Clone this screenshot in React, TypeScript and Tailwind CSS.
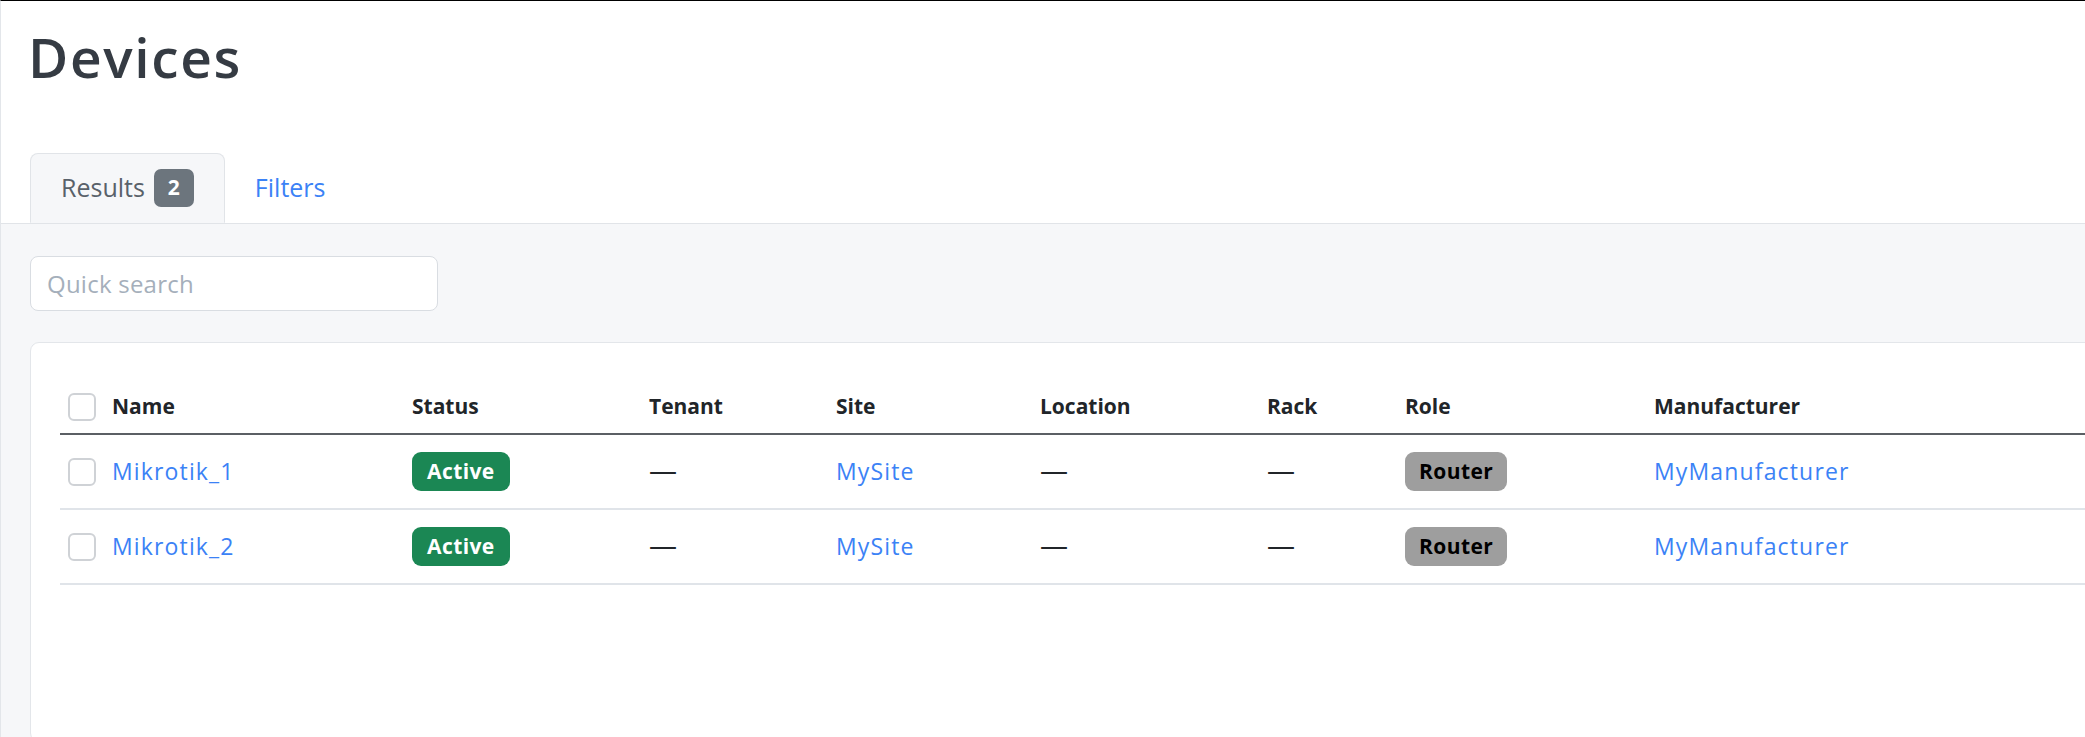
const columns = ["Status", "Tenant", "Site", "Location", "Rack", "Role", "Manufacturer"];

const devices = [
    { id: 1, name: "Mikrotik_1", site: "MySite", role: "Router", manufacturer: "MyManufacturer" },
    { id: 2, name: "Mikrotik_2", site: "MySite", role: "Router", manufacturer: "MyManufacturer" },
];

const grid = "grid grid-cols-[344px_237px_187px_204px_227px_138px_249px_1fr] items-center";

function Checkbox() {
    return <span className="block size-[28px] shrink-0 rounded-[6px] border-2 border-[#cfd2d6] bg-white" />
}

function Dash() {
    return <span className="text-[28px] leading-none text-[#212529]">—</span>
}

function App() {
    return (
        <div className="w-[2085px] h-[737px] overflow-hidden flex flex-col bg-white border-t border-black border-l border-l-[#e3e6ea] font-['Open_Sans',sans-serif]">
            <h1 className="pl-[27px] pt-[28px] text-[55px] leading-none font-semibold tracking-[0.03em] text-[#353b43]">Devices</h1>

            <div className="mt-[69px] flex border-b border-[#e1e4e8] pl-[29px]">
                <div className="h-[70px] -mb-px flex items-center px-[30px] border border-[#e1e4e8] border-b-transparent rounded-t-[8px] bg-[#f6f7f9]">
                    <span className="text-[25px] text-[#59616a]">Results</span>
                    <span className="ml-[9px] w-[40px] h-[38px] rounded-[7px] bg-[#6c757d] text-white font-bold text-[21px] flex items-center justify-center">2</span>
                </div>
                <div className="h-[70px] flex items-center px-[30px] text-[25px] text-[#3b82f6]">Filters</div>
            </div>

            <div className="flex-1 bg-[#f6f7f9] pl-[29px] pt-[32px]">
                <input
                    className="w-[408px] h-[55px] rounded-[8px] border border-[#d9dde2] bg-white px-[16px] text-[24px] tracking-[0.01em] outline-none placeholder:text-[#a5afbb]"
                    placeholder="Quick search"
                />

                <div className="mt-[31px] w-[2120px] h-[400px] bg-white border border-[#e3e6ea] rounded-[9px] pl-[29px] pt-[34px]">
                    <div className={grid + " h-[58px] pt-[3px] border-b-2 border-[#5b5f64] text-[21px] font-bold text-[#212529]"}>
                        <div className="pl-2 flex items-center gap-[16px]">
                            <Checkbox />
                            <span>Name</span>
                        </div>
                        {columns.map(col => (
                            <div key={col} className="pl-2">{col}</div>
                        ))}
                    </div>

                    {devices.map(device => (
                        <div key={device.id} className={grid + " h-[75px] border-b-2 border-[#e0e4e9] text-[23px] tracking-[0.05em]"}>
                            <div className="pl-2 flex items-center gap-[16px]">
                                <Checkbox />
                                <span className="text-[#3b82f6]">{device.name}</span>
                            </div>
                            <div className="pl-2">
                                <span className="inline-flex items-center h-[39px] px-[15px] rounded-[9px] bg-[#1b8754] text-white font-bold text-[21px] tracking-[0.02em]">Active</span>
                            </div>
                            <div className="pl-2"><Dash /></div>
                            <div className="pl-2 text-[#3b82f6]">{device.site}</div>
                            <div className="pl-2"><Dash /></div>
                            <div className="pl-2"><Dash /></div>
                            <div className="pl-2">
                                <span className="inline-flex items-center h-[39px] px-[14px] rounded-[9px] bg-[#9e9e9e] text-black font-bold text-[21px] tracking-[0.02em]">{device.role}</span>
                            </div>
                            <div className="pl-2 text-[#3b82f6]">{device.manufacturer}</div>
                        </div>
                    ))}
                </div>
            </div>
        </div>
    )
}

export default App;
